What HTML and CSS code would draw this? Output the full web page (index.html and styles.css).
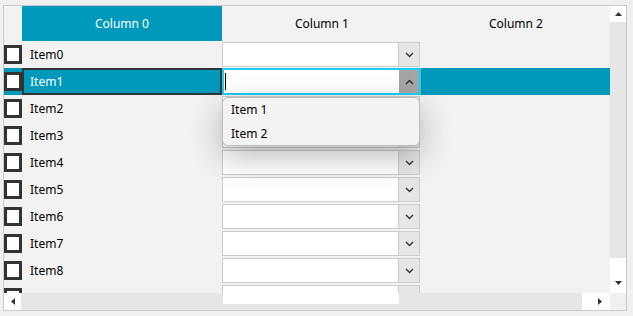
FILE: index.html
```html
<!DOCTYPE html>
<html lang="en">
<head>
  <meta charset="UTF-8">
  <title>Data Grid</title>
  <link rel="stylesheet" href="styles.css">
</head>
<body>
  <div class="grid">
    <div class="view">
      <div class="header">
        <div class="hcell"></div>
        <div class="hcell current">Column 0</div>
        <div class="hcell">Column 1</div>
        <div class="hcell">Column 2</div>
      </div>

      <div class="row">
        <div class="rowhead"><span class="check"></span></div>
        <div class="cell name">Item0</div>
        <div class="cell"><div class="combo"><div class="field"></div><div class="drop"><svg width="9" height="6" viewBox="0 0 9 6"><path d="M1 1l3.5 3.5L8 1" fill="none" stroke="#3a3a3a" stroke-width="1.5"/></svg></div></div></div>
        <div class="cell"></div>
      </div>

      <div class="row selected">
        <div class="rowhead"><span class="check"></span></div>
        <div class="cell name">Item1</div>
        <div class="cell"><div class="combo open"><div class="field"><span class="caret"></span></div><div class="drop"><svg width="9" height="6" viewBox="0 0 9 6"><path d="M1 5l3.5-3.5L8 5" fill="none" stroke="#333" stroke-width="1.5"/></svg></div></div></div>
        <div class="cell"></div>
      </div>

      <div class="row">
        <div class="rowhead"><span class="check"></span></div>
        <div class="cell name">Item2</div>
        <div class="cell"><div class="combo"><div class="field"></div><div class="drop"><svg width="9" height="6" viewBox="0 0 9 6"><path d="M1 1l3.5 3.5L8 1" fill="none" stroke="#3a3a3a" stroke-width="1.5"/></svg></div></div></div>
        <div class="cell"></div>
      </div>

      <div class="row">
        <div class="rowhead"><span class="check"></span></div>
        <div class="cell name">Item3</div>
        <div class="cell"><div class="combo"><div class="field"></div><div class="drop"><svg width="9" height="6" viewBox="0 0 9 6"><path d="M1 1l3.5 3.5L8 1" fill="none" stroke="#3a3a3a" stroke-width="1.5"/></svg></div></div></div>
        <div class="cell"></div>
      </div>

      <div class="row">
        <div class="rowhead"><span class="check"></span></div>
        <div class="cell name">Item4</div>
        <div class="cell"><div class="combo"><div class="field"></div><div class="drop"><svg width="9" height="6" viewBox="0 0 9 6"><path d="M1 1l3.5 3.5L8 1" fill="none" stroke="#3a3a3a" stroke-width="1.5"/></svg></div></div></div>
        <div class="cell"></div>
      </div>

      <div class="row">
        <div class="rowhead"><span class="check"></span></div>
        <div class="cell name">Item5</div>
        <div class="cell"><div class="combo"><div class="field"></div><div class="drop"><svg width="9" height="6" viewBox="0 0 9 6"><path d="M1 1l3.5 3.5L8 1" fill="none" stroke="#3a3a3a" stroke-width="1.5"/></svg></div></div></div>
        <div class="cell"></div>
      </div>

      <div class="row">
        <div class="rowhead"><span class="check"></span></div>
        <div class="cell name">Item6</div>
        <div class="cell"><div class="combo"><div class="field"></div><div class="drop"><svg width="9" height="6" viewBox="0 0 9 6"><path d="M1 1l3.5 3.5L8 1" fill="none" stroke="#3a3a3a" stroke-width="1.5"/></svg></div></div></div>
        <div class="cell"></div>
      </div>

      <div class="row">
        <div class="rowhead"><span class="check"></span></div>
        <div class="cell name">Item7</div>
        <div class="cell"><div class="combo"><div class="field"></div><div class="drop"><svg width="9" height="6" viewBox="0 0 9 6"><path d="M1 1l3.5 3.5L8 1" fill="none" stroke="#3a3a3a" stroke-width="1.5"/></svg></div></div></div>
        <div class="cell"></div>
      </div>

      <div class="row">
        <div class="rowhead"><span class="check"></span></div>
        <div class="cell name">Item8</div>
        <div class="cell"><div class="combo"><div class="field"></div><div class="drop"><svg width="9" height="6" viewBox="0 0 9 6"><path d="M1 1l3.5 3.5L8 1" fill="none" stroke="#3a3a3a" stroke-width="1.5"/></svg></div></div></div>
        <div class="cell"></div>
      </div>

      <!-- partly scrolled out of view -->
      <div class="row">
        <div class="rowhead"><span class="check"></span></div>
        <div class="cell name"></div>
        <div class="cell"><div class="combo"><div class="field"></div><div class="drop"></div></div></div>
        <div class="cell"></div>
      </div>
    </div>

    <div class="vscroll">
      <div class="sbtn"><svg width="7" height="4" viewBox="0 0 7 4"><path d="M0 4L3.5 0L7 4z" fill="#333"/></svg></div>
      <div class="track"></div>
      <div class="sbtn tall"><svg width="7" height="4" viewBox="0 0 7 4"><path d="M0 0L3.5 4L7 0z" fill="#333"/></svg></div>
    </div>

    <div class="hscroll">
      <div class="sbtn"><svg width="4" height="7" viewBox="0 0 4 7"><path d="M4 0L0 3.5L4 7z" fill="#333"/></svg></div>
      <div class="track"></div>
      <div class="sbtn wide"><svg width="4" height="7" viewBox="0 0 4 7"><path d="M0 0L4 3.5L0 7z" fill="#333"/></svg></div>
    </div>
    <div class="sizer"></div>

    <div class="popup">
      <div class="option">Item 1</div>
      <div class="option">Item 2</div>
    </div>
    <div class="bleed"></div>
  </div>
</body>
</html>
```

FILE: styles.css
```css
body {
  margin: 5px 0 0 3px;
  background-color: #f0f0f0;
  font-family: "Noto Sans", "Open Sans", sans-serif;
  font-size: 12px;
  color: #000;
}

.grid {
  position: relative;
  display: grid;
  grid-template-columns: 606px 16px;
  grid-template-rows: 287px 17px;
  width: 622px;
  border: 1px solid #cbcbcb;
  background-color: #f2f2f2;
}

.view {
  overflow: hidden;
}

.header,
.row {
  display: grid;
  grid-template-columns: 18px 200px 200px 188px;
}

.header {
  height: 35px;
}

.hcell {
  display: flex;
  align-items: center;
  justify-content: center;
}

.hcell.current {
  background-color: #0099bc;
  color: #fff;
}

.row {
  height: 27px;
}

.rowhead {
  display: flex;
  align-items: center;
}

.check {
  width: 18px;
  height: 19px;
  box-sizing: border-box;
  border: 3px solid #333;
  background-color: #fff;
}

.cell {
  display: flex;
  align-items: center;
}

.name {
  padding-left: 8px;
}

.combo {
  display: flex;
  width: 198px;
  height: 25px;
  box-sizing: border-box;
  border: 1px solid #cccccc;
  background-color: #fff;
}

.combo .field {
  flex: 1;
  display: flex;
  align-items: center;
}

.combo .drop {
  width: 20px;
  border-left: 1px solid #cccccc;
  background-color: #e6e6e6;
  display: flex;
  align-items: center;
  justify-content: center;
}

.row.selected {
  background-color: #0099bc;
}

.row.selected .name {
  border: 2px solid #333;
  padding-left: 6px;
  color: #fff;
}

.combo.open {
  width: 199px;
  height: 27px;
  border: 2px solid #1fcdf3;
}

.combo.open .drop {
  border-left: none;
  background-color: #a6a6a6;
}

.caret {
  width: 1px;
  height: 17px;
  margin-left: 1px;
  background-color: #000;
}

.vscroll,
.hscroll {
  display: flex;
  background-color: #e6e6e6;
}

.vscroll {
  flex-direction: column;
}

.sbtn {
  flex: 0 0 17px;
  display: flex;
  align-items: center;
  justify-content: center;
  background-color: #fff;
}

.vscroll .sbtn {
  flex-basis: 16px;
}

.sbtn.tall {
  flex-basis: 35px;
  align-items: flex-end;
  padding-bottom: 8px;
  box-sizing: border-box;
}

.sbtn.wide {
  flex-basis: 28px;
  justify-content: flex-end;
  padding-right: 8px;
  box-sizing: border-box;
}

.track {
  flex: 1;
}

.sizer {
  background-color: #f0f0f0;
}

.popup {
  position: absolute;
  left: 218px;
  top: 91px;
  width: 198px;
  height: 49px;
  box-sizing: border-box;
  padding-top: 1px;
  border: 1px solid #bdbdbd;
  border-radius: 6px;
  background-color: #f3f3f3;
  box-shadow: 0 10px 32px rgba(0, 0, 0, 0.28);
}

.option {
  height: 24px;
  line-height: 22px;
  padding-left: 8px;
}

.bleed {
  position: absolute;
  left: 219px;
  top: 287px;
  width: 176px;
  height: 11px;
  background-color: #fff;
}
```
